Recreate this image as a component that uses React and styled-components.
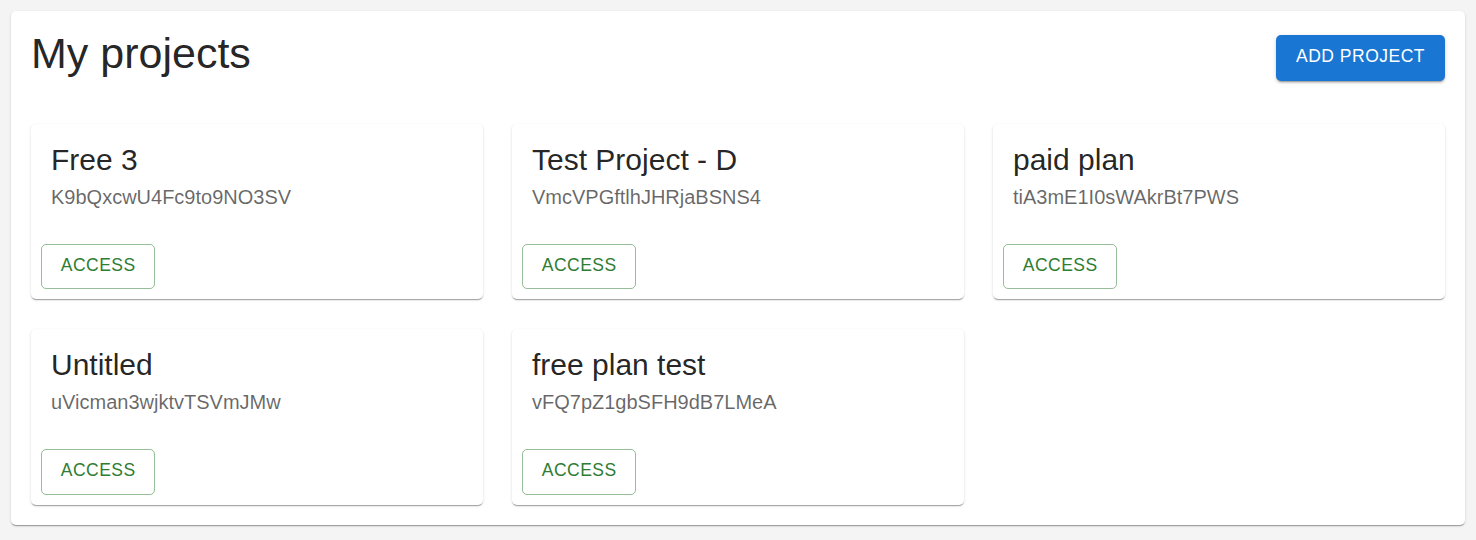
import React from 'react';
import styled, { createGlobalStyle } from 'styled-components';

const GlobalStyle = createGlobalStyle`
  body {
    margin: 0;
    background: #f4f4f4;
    font-family: "Liberation Sans", Arial, sans-serif;
  }
`;

const Page = styled.main`
  padding: 11px;
`;

const Paper = styled.section`
  background: #fff;
  border-radius: 5px;
  padding: 20px;
  box-shadow: 0 2px 1px -1px rgba(0, 0, 0, 0.2), 0 1px 1px 0 rgba(0, 0, 0, 0.14),
    0 1px 3px 0 rgba(0, 0, 0, 0.12);
`;

const Header = styled.header`
  display: flex;
  justify-content: space-between;
  align-items: flex-start;
`;

const Title = styled.h1`
  margin: 0;
  font-size: 43px;
  font-weight: 400;
  line-height: 44px;
  color: rgba(0, 0, 0, 0.87);
`;

const Button = styled.button`
  font-family: inherit;
  font-size: 17.5px;
  line-height: 1.75;
  letter-spacing: 0.5px;
  text-transform: uppercase;
  border-radius: 5px;
  cursor: pointer;
`;

const ContainedButton = styled(Button)`
  margin-top: 4px;
  padding: 6px 20px 9px;
  border: 0;
  color: #fff;
  background: #1976d2;
  box-shadow: 0 3px 1px -2px rgba(0, 0, 0, 0.2), 0 2px 2px 0 rgba(0, 0, 0, 0.14),
    0 1px 5px 0 rgba(0, 0, 0, 0.12);
`;

const OutlinedButton = styled(Button)`
  padding: 5px 18.75px 8px;
  color: ${(p) => p.tone};
  background: transparent;
  border: 1.25px solid ${(p) => p.tone}80;
`;

const Grid = styled.div`
  margin-top: 43px;
  display: grid;
  grid-template-columns: repeat(3, 1fr);
  gap: 30px 29px;
`;

const Card = styled.article`
  background: #fff;
  border-radius: 5px;
  box-shadow: 0 2px 1px -1px rgba(0, 0, 0, 0.2), 0 1px 1px 0 rgba(0, 0, 0, 0.14),
    0 1px 3px 0 rgba(0, 0, 0, 0.12);
`;

const CardContent = styled.div`
  padding: 16px 20px 22px;
`;

const CardTitle = styled.h2`
  margin: 0;
  font-size: 30px;
  font-weight: 400;
  line-height: 40px;
  color: rgba(0, 0, 0, 0.87);
`;

const CardKey = styled.p`
  margin: 2px 0 0;
  font-size: 20px;
  line-height: 30px;
  color: rgba(0, 0, 0, 0.6);
`;

const CardActions = styled.div`
  display: flex;
  padding: 10px;
`;

const projects = [
  { name: 'Free 3', key: 'K9bQxcwU4Fc9to9NO3SV' },
  { name: 'Test Project - D', key: 'VmcVPGftlhJHRjaBSNS4' },
  { name: 'paid plan', key: 'tiA3mE1I0sWAkrBt7PWS' },
  { name: 'Untitled', key: 'uVicman3wjktvTSVmJMw' },
  { name: 'free plan test', key: 'vFQ7pZ1gbSFH9dB7LMeA' },
];

const ProjectCard = ({ project }) => (
  <Card>
    <CardContent>
      <CardTitle>{project.name}</CardTitle>
      <CardKey>{project.key}</CardKey>
    </CardContent>
    <CardActions>
      <OutlinedButton tone="#2e7d32">Access</OutlinedButton>
    </CardActions>
  </Card>
);

export default function App() {
  return (
    <Page>
      <GlobalStyle />
      <Paper>
        <Header>
          <Title>My projects</Title>
          <ContainedButton>Add project</ContainedButton>
        </Header>
        <Grid>
          {projects.map((p) => (
            <ProjectCard key={p.key} project={p} />
          ))}
        </Grid>
      </Paper>
    </Page>
  );
}
